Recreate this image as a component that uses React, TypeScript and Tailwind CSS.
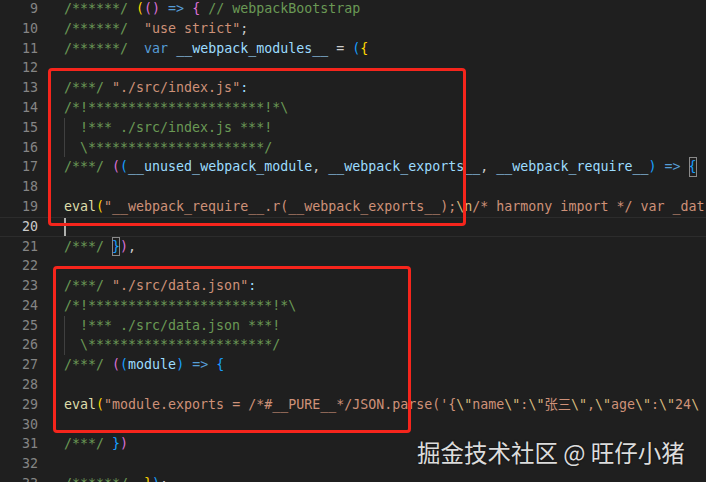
type Seg = [string, string];

const C = {
  com: "text-[#6a9955]",
  str: "text-[#ce9178]",
  kw: "text-[#569cd6]",
  v: "text-[#9cdcfe]",
  fn: "text-[#dcdcaa]",
  esc: "text-[#d7ba7d]",
  p: "text-[#cccccc]",
  gold: "text-[#ffd700]",
  orc: "text-[#da70d6]",
  blu: "text-[#179fff]",
  box: "text-[#179fff] outline outline-1 outline-[#8a8a8a] -outline-offset-1",
};

const lines: { n: number; segs: Seg[]; guide?: boolean; active?: boolean }[] = [
  {
    n: 9,
    segs: [
      ["/******/ ", C.com],
      ["(", C.gold],
      ["()", C.orc],
      [" ", C.p],
      ["=>", C.kw],
      [" ", C.p],
      ["{", C.orc],
      [" // webpackBootstrap", C.com],
    ],
  },
  { n: 10, segs: [["/******/ ", C.com], [" ", C.p], ['"use strict"', C.str], [";", C.p]] },
  {
    n: 11,
    segs: [
      ["/******/ ", C.com],
      [" ", C.p],
      ["var", C.kw],
      [" ", C.p],
      ["__webpack_modules__", C.v],
      [" = ", C.p],
      ["(", C.blu],
      ["{", C.gold],
    ],
  },
  { n: 12, segs: [] },
  { n: 13, segs: [["/***/ ", C.com], ['"./src/index.js"', C.str], [":", C.v]] },
  { n: 14, segs: [["/*!**********************!*\\", C.com]] },
  { n: 15, guide: true, segs: [["  !*** ./src/index.js ***!", C.com]] },
  { n: 16, guide: true, segs: [["  \\**********************/", C.com]] },
  {
    n: 17,
    segs: [
      ["/***/ ", C.com],
      ["(", C.orc],
      ["(", C.blu],
      ["__unused_webpack_module", C.v],
      [", ", C.p],
      ["__webpack_exports__", C.v],
      [", ", C.p],
      ["__webpack_require__", C.v],
      [")", C.blu],
      [" ", C.p],
      ["=>", C.kw],
      [" ", C.p],
      ["{", C.box],
    ],
  },
  { n: 18, segs: [] },
  {
    n: 19,
    segs: [
      ["eval", C.fn],
      ["(", C.gold],
      ['"__webpack_require__.r(__webpack_exports__);', C.str],
      ["\\n", C.esc],
      ["/* harmony import */ var _dat", C.str],
    ],
  },
  { n: 20, segs: [], active: true },
  { n: 21, segs: [["/***/ ", C.com], ["}", C.box], [")", C.orc], [",", C.p]] },
  { n: 22, segs: [] },
  { n: 23, segs: [["/***/ ", C.com], ['"./src/data.json"', C.str], [":", C.v]] },
  { n: 24, segs: [["/*!***********************!*\\", C.com]] },
  { n: 25, guide: true, segs: [["  !*** ./src/data.json ***!", C.com]] },
  { n: 26, guide: true, segs: [["  \\***********************/", C.com]] },
  {
    n: 27,
    segs: [
      ["/***/ ", C.com],
      ["(", C.orc],
      ["(", C.blu],
      ["module", C.v],
      [")", C.blu],
      [" ", C.p],
      ["=>", C.kw],
      [" ", C.p],
      ["{", C.blu],
    ],
  },
  { n: 28, segs: [] },
  {
    n: 29,
    segs: [
      ["eval", C.fn],
      ["(", C.gold],
      ["\"module.exports = /*#__PURE__*/JSON.parse('{", C.str],
      ['\\"', C.esc],
      ["name", C.str],
      ['\\"', C.esc],
      [":", C.str],
      ['\\"', C.esc],
      ["张三", C.str],
      ['\\"', C.esc],
      [",", C.str],
      ['\\"', C.esc],
      ["age", C.str],
      ['\\"', C.esc],
      [":", C.str],
      ['\\"', C.esc],
      ["24", C.str],
      ['\\', C.esc],
    ],
  },
  { n: 30, segs: [] },
  { n: 31, segs: [["/***/ ", C.com], ["}", C.blu], [")", C.orc]] },
  { n: 32, segs: [] },
  { n: 33, segs: [["/******/ ", C.com], [" ", C.p], ["}", C.gold], [")", C.blu], [";", C.p]] },
];

export default function App() {
  return (
    <div className="relative h-[482px] w-[706px] overflow-hidden bg-[#1f1f1f] font-['DejaVu_Sans_Mono','Noto_Sans_CJK_SC',monospace] text-[13.3px]">
      <div className="-mt-[1px] flex flex-col">
        {lines.map((l) => (
          <div
            key={l.n}
            className={`flex h-[19.8px] items-center whitespace-pre ${
              l.active ? "border-y border-[#2c2c2c]" : ""
            }`}
          >
            <div
              className={`w-[38px] shrink-0 text-right ${
                l.active ? "text-[#cccccc]" : "text-[#858585]"
              }`}
            >
              {l.n}
            </div>
            <div className="relative ml-[26px] flex h-full items-center">
              {l.guide && <div className="absolute left-0 top-0 h-full w-px bg-[#404040]" />}
              {l.active && <div className="absolute left-0 top-0 h-full w-[2px] bg-[#aeafad]" />}
              {l.segs.map((s, i) => (
                <span key={i} className={s[1]}>
                  {s[0]}
                </span>
              ))}
            </div>
          </div>
        ))}
      </div>

      <div className="pointer-events-none absolute left-[48px] top-[68px] h-[158px] w-[418px] rounded-[4px] border-[3px] border-[#f5251c]" />
      <div className="pointer-events-none absolute left-[53px] top-[266px] h-[167px] w-[358px] rounded-[4px] border-[3px] border-[#f5251c]" />

      <div className="absolute left-[417px] top-[436px] font-['Noto_Sans_CJK_SC',sans-serif] text-[23.5px] leading-[32px] text-[#dcdcdc] [text-shadow:0_0_2px_rgba(0,0,0,0.6)]">
        掘金技术社区 @ 旺仔小猪
      </div>
    </div>
  );
}
